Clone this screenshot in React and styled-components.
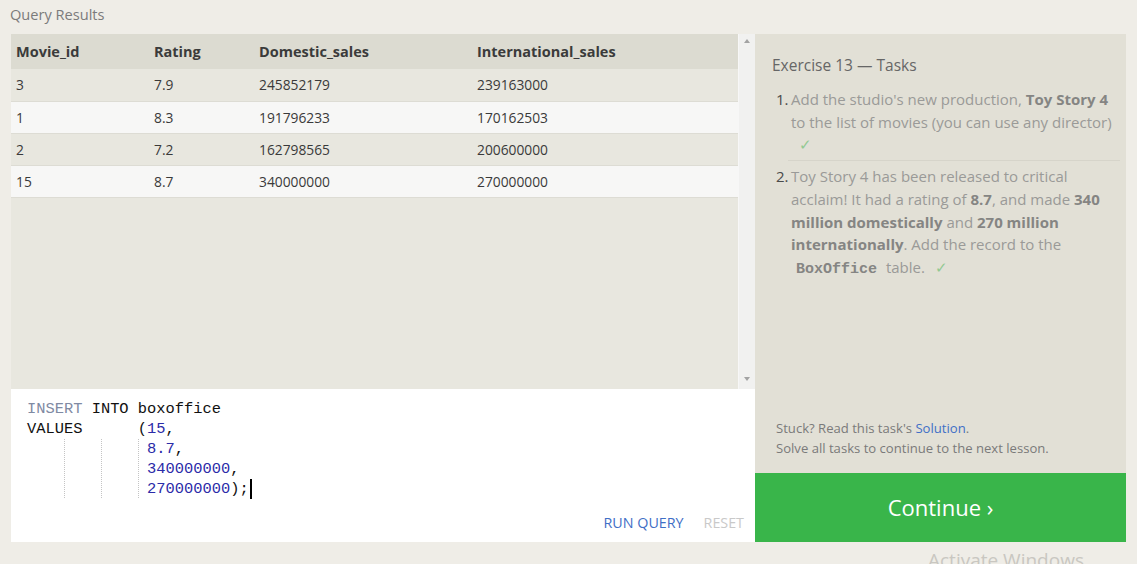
import React from "react";
import styled, { createGlobalStyle } from "styled-components";

const Global = createGlobalStyle`
  html, body { margin: 0; padding: 0; background: #efede7; }
  body { font-family: "Open Sans", "Noto Sans", sans-serif; overflow: hidden; }
  * { box-sizing: border-box; }
`;

const Page = styled.div`
  position: relative;
  width: 1137px;
  height: 564px;
  padding: 0 11px 0 11px;
  overflow: hidden;
`;

const Heading = styled.div`
  height: 34px;
  padding: 4px 0 0 0;
  margin-left: -1px;
  font-size: 14.6px;
  color: #7b7b7b;
`;

const Main = styled.div`
  display: flex;
  height: 508px;
`;

const LeftCol = styled.div`
  width: 744px;
  display: flex;
  flex-direction: column;
`;

const Results = styled.div`
  height: 355px;
  display: flex;
  background: #e8e7df;
`;

const TableWrap = styled.div`
  flex: 1;
`;

const Table = styled.table`
  width: 100%;
  border-collapse: collapse;
  table-layout: fixed;
  font-size: 13.8px;
  color: #3a3a3a;
`;

const Th = styled.th`
  width: ${(p) => p.w || "auto"};
  height: 35px;
  background: #dcdbd1;
  text-align: left;
  font-weight: 700;
  font-size: 14.5px;
  padding: 0 0 0 5px;
  color: #3b3b3b;
`;

const Tr = styled.tr`
  background: ${(p) => (p.alt ? "#f7f7f6" : "#e8e7df")};
  border-bottom: 1px solid #dddcd4;
`;

const Td = styled.td`
  height: 32px;
  padding: 0 0 0 5px;
`;

const Scrollbar = styled.div`
  width: 17px;
  background: #f1f1f0;
  display: flex;
  flex-direction: column;
  justify-content: space-between;
  align-items: center;
  padding: 5px 0 8px 0;
  border-left: 1px solid #f7f7f7;
`;

const Arrow = styled.div`
  width: 0;
  height: 0;
  border-left: 3.5px solid transparent;
  border-right: 3.5px solid transparent;
  ${(p) =>
    p.down
      ? "border-top: 4px solid #a3a3a3;"
      : "border-bottom: 4px solid #a3a3a3;"}
`;

const Editor = styled.div`
  flex: 1;
  background: #ffffff;
  display: flex;
  flex-direction: column;
`;

const Code = styled.div`
  flex: 1;
  padding: 10px 0 0 16px;
  font-family: "Liberation Mono", "DejaVu Sans Mono", monospace;
  font-size: 15.4px;
  line-height: 20px;
  color: #111;
  white-space: pre;
`;

const Line = styled.div`
  height: 20px;
  display: flex;
  align-items: stretch;
`;

const Indent = styled.span`
  display: inline-block;
  width: ${(p) => p.n}ch;
  ${(p) =>
    p.guide
      ? "background: linear-gradient(#c4c4c4 50%, transparent 50%) left top / 1px 2px repeat-y;"
      : ""}
`;

const Kw = styled.span`
  color: ${(p) => (p.dim ? "#7f8aa3" : "#111")};
`;

const Num = styled.span`
  color: #2b2ba8;
`;

const Caret = styled.span`
  display: inline-block;
  width: 2px;
  height: 20px;
  background: #000;
  margin-left: 1px;
`;

const EditorFooter = styled.div`
  display: flex;
  justify-content: flex-end;
  gap: 20px;
  padding: 0 11px 10px 0;
  font-size: 14.3px;
`;

const LinkButton = styled.span`
  color: ${(p) => (p.disabled ? "#c9c9c9" : "#3f6fc6")};
`;

const RightCol = styled.div`
  width: 371px;
  display: flex;
  flex-direction: column;
`;

const Tasks = styled.div`
  flex: 1;
  background: #e2e0d6;
  padding: 20px 6px 0 0;
  display: flex;
  flex-direction: column;
`;

const TasksTitle = styled.div`
  margin-left: 17px;
  font-size: 15.5px;
  color: #666;
  margin-bottom: 12px;
`;

const List = styled.div`
  display: flex;
  flex-direction: column;
  font-size: 15px;
  line-height: 22.7px;
  color: #9a9a98;
`;

const Item = styled.div`
  display: flex;
  padding-left: 21px;
`;

const ItemNum = styled.span`
  width: 15px;
  flex-shrink: 0;
  color: #4a4a4a;
`;

const ItemBody = styled.div`
  flex: 1;
`;

const B = styled.b`
  color: #858583;
  font-weight: 700;
`;

const Mono = styled.code`
  font-family: "Liberation Mono", "DejaVu Sans Mono", monospace;
  font-weight: 700;
  font-size: 15px;
  color: #858583;
  padding: 0 5px;
`;

const Check = styled.span`
  color: #92c992;
  padding-left: ${(p) => p.pad || 0}px;
`;

const Rule = styled.div`
  height: 1px;
  background: #d6d4ca;
  margin: 4px 0 4px 33px;
`;

const Spacer = styled.div`
  flex: 1;
`;

const Help = styled.div`
  padding: 0 0 15px 21px;
  font-size: 13.1px;
  line-height: 20px;
  color: #7a7a7a;
`;

const HelpLink = styled.span`
  color: #3f6fc6;
`;

const ContinueButton = styled.div`
  height: 69px;
  background: #39b54a;
  color: #ffffff;
  font-size: 22px;
  display: flex;
  align-items: center;
  justify-content: center;
  padding-bottom: 2px;
`;

const Watermark = styled.div`
  position: absolute;
  left: 928px;
  top: 547px;
  font-size: 19px;
  color: #c9c7c1;
`;

const rows = [
  ["3", "7.9", "245852179", "239163000"],
  ["1", "8.3", "191796233", "170162503"],
  ["2", "7.2", "162798565", "200600000"],
  ["15", "8.7", "340000000", "270000000"],
];

function ValueLine({ children }) {
  return (
    <Line>
      <Indent n={4} />
      <Indent n={4} guide />
      <Indent n={4} guide />
      <Indent n={1} guide />
      {children}
    </Line>
  );
}

export default function App() {
  return (
    <>
      <Global />
      <Page>
        <Heading>Query Results</Heading>
        <Main>
          <LeftCol>
            <Results>
              <TableWrap>
                <Table>
                  <thead>
                    <tr>
                      <Th w="138px">Movie_id</Th>
                      <Th w="105px">Rating</Th>
                      <Th w="218px">Domestic_sales</Th>
                      <Th>International_sales</Th>
                    </tr>
                  </thead>
                  <tbody>
                    {rows.map((r, i) => (
                      <Tr key={i} alt={i % 2 === 1}>
                        {r.map((c, j) => (
                          <Td key={j}>{c}</Td>
                        ))}
                      </Tr>
                    ))}
                  </tbody>
                </Table>
              </TableWrap>
              <Scrollbar>
                <Arrow />
                <Arrow down />
              </Scrollbar>
            </Results>
            <Editor>
              <Code>
                <Line>
                  <Kw dim>INSERT</Kw> INTO boxoffice
                </Line>
                <Line>
                  VALUES      (<Num>15</Num>,
                </Line>
                <ValueLine>
                  <Num>8.7</Num>,
                </ValueLine>
                <ValueLine>
                  <Num>340000000</Num>,
                </ValueLine>
                <ValueLine>
                  <Num>270000000</Num>);<Caret />
                </ValueLine>
              </Code>
              <EditorFooter>
                <LinkButton>RUN QUERY</LinkButton>
                <LinkButton disabled>RESET</LinkButton>
              </EditorFooter>
            </Editor>
          </LeftCol>
          <RightCol>
            <Tasks>
              <TasksTitle>Exercise 13 — Tasks</TasksTitle>
              <List>
                <Item>
                  <ItemNum>1.</ItemNum>
                  <ItemBody>
                    Add the studio's new production, <B>Toy Story 4</B> to the
                    list of movies (you can use any director)
                    <br />
                    <Check pad={8}>✓</Check>
                  </ItemBody>
                </Item>
                <Rule />
                <Item>
                  <ItemNum>2.</ItemNum>
                  <ItemBody>
                    Toy Story 4 has been released to critical acclaim! It had a
                    rating of <B>8.7</B>, and made <B>340 million domestically</B>{" "}
                    and <B>270 million internationally</B>. Add the record to
                    the <Mono>BoxOffice</Mono> table. <Check pad={6}>✓</Check>
                  </ItemBody>
                </Item>
              </List>
              <Spacer />
              <Help>
                Stuck? Read this task's <HelpLink>Solution</HelpLink>.
                <br />
                Solve all tasks to continue to the next lesson.
              </Help>
            </Tasks>
            <ContinueButton>Continue ›</ContinueButton>
          </RightCol>
        </Main>
        <Watermark>Activate Windows</Watermark>
      </Page>
    </>
  );
}
